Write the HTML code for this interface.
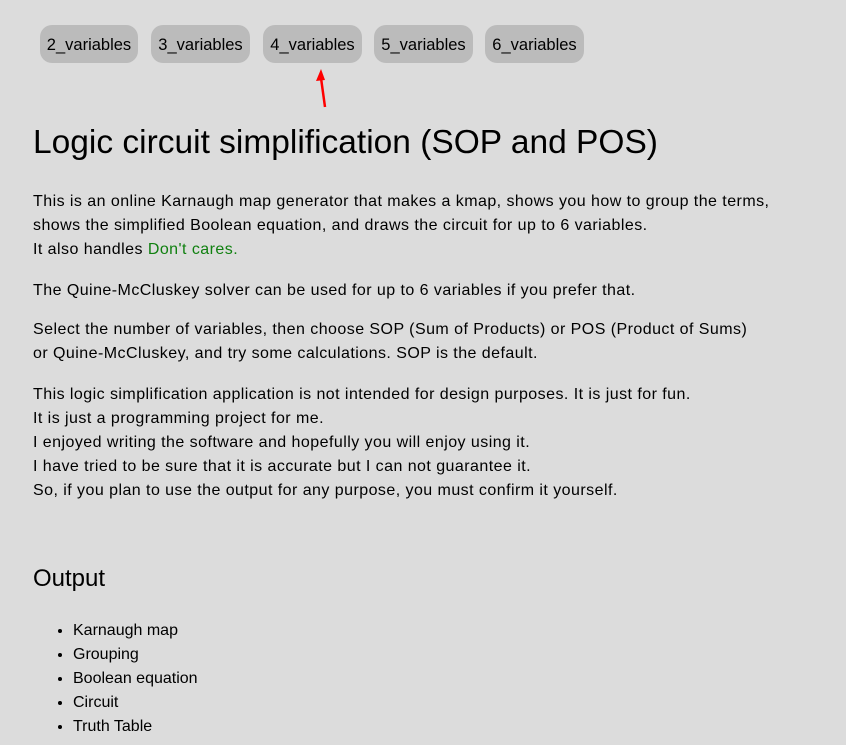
<!DOCTYPE html>
<html><head><style>
body{margin:0;background:#dcdcdc;font-family:"Liberation Sans",sans-serif;color:#000;width:846px;height:745px;overflow:hidden;position:relative}
.btn{position:absolute;top:25px;height:38px;line-height:40px;background:#bbb;border-radius:12px;font-size:16.5px;text-align:center}
h1{position:absolute;left:33px;top:124px;margin:0;font-weight:normal;font-size:33.5px;white-space:nowrap}
.p{position:absolute;left:33px;font-size:16px;line-height:24px;letter-spacing:0.45px;white-space:nowrap}
h2{position:absolute;left:33px;top:565px;margin:0;font-weight:normal;font-size:24px}
ul{position:absolute;left:33px;top:619px;margin:0;padding-left:40px;font-size:16px;line-height:24px}
</style></head><body>
<div class="btn" style="left:40px;width:98px">2_variables</div>
<div class="btn" style="left:151px;width:99px">3_variables</div>
<div class="btn" style="left:263px;width:99px">4_variables</div>
<div class="btn" style="left:374px;width:99px">5_variables</div>
<div class="btn" style="left:485px;width:99px">6_variables</div>
<svg style="position:absolute;left:314px;top:66px" width="20" height="44"><path d="M11 41 L7 12" stroke="#f00" stroke-width="2.5"/><path d="M7 3 L2 15 L11 14 Z" fill="#f00"/></svg>
<h1>Logic circuit simplification (SOP and POS)</h1>
<div class="p" style="top:190px">This is an online Karnaugh map generator that makes a kmap, shows you how to group the terms,<br>shows the simplified Boolean equation, and draws the circuit for up to 6 variables.<br>It also handles <span style="color:#108010">Don't cares.</span></div>
<div class="p" style="top:279px">The Quine-McCluskey solver can be used for up to 6 variables if you prefer that.</div>
<div class="p" style="top:318px">Select the number of variables, then choose SOP (Sum of Products) or POS (Product of Sums)<br>or Quine-McCluskey, and try some calculations. SOP is the default.</div>
<div class="p" style="top:383px">This logic simplification application is not intended for design purposes. It is just for fun.<br>It is just a programming project for me.<br>I enjoyed writing the software and hopefully you will enjoy using it.<br>I have tried to be sure that it is accurate but I can not guarantee it.<br>So, if you plan to use the output for any purpose, you must confirm it yourself.</div>
<h2>Output</h2>
<ul><li>Karnaugh map</li><li>Grouping</li><li>Boolean equation</li><li>Circuit</li><li>Truth Table</li></ul>
</body></html>
